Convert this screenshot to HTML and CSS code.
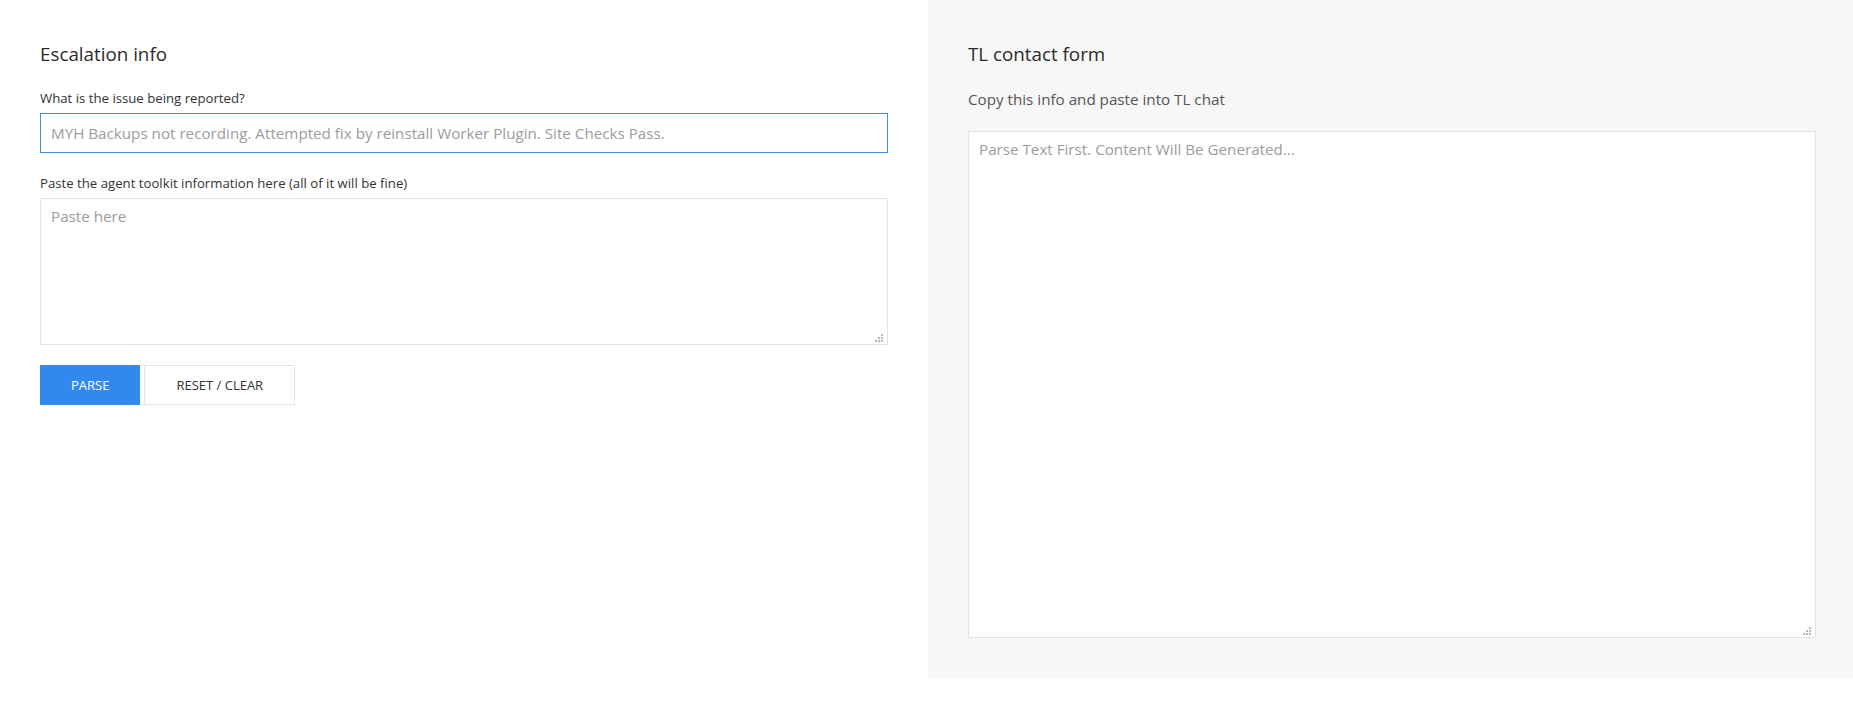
FILE: index.html
```html
<!DOCTYPE html>
<html lang="en">
<head>
<meta charset="utf-8">
<title>Escalation info</title>
<link rel="stylesheet" href="styles.css">
</head>
<body>
<div class="page">
  <section class="col col-left">
    <h2 class="title">Escalation info</h2>
    <div class="group">
      <label class="label" for="issue">What is the issue being reported?</label>
      <input class="input" id="issue" type="text" placeholder="MYH Backups not recording. Attempted fix by reinstall Worker Plugin. Site Checks Pass.">
    </div>
    <div class="group">
      <label class="label" for="toolkit">Paste the agent toolkit information here (all of it will be fine)</label>
      <div class="area-wrap">
        <textarea class="area area-small" id="toolkit" placeholder="Paste here"></textarea>
        <svg class="grip" width="8" height="8" viewBox="0 0 8 8"><rect x="6" y="0" width="2" height="2"/><rect x="3" y="3" width="2" height="2"/><rect x="6" y="3" width="2" height="2"/><rect x="0" y="6" width="2" height="2"/><rect x="3" y="6" width="2" height="2"/><rect x="6" y="6" width="2" height="2"/></svg>
      </div>
    </div>
    <div class="actions">
      <button class="btn btn-primary" type="button">PARSE</button>
      <button class="btn btn-default" type="button">RESET / CLEAR</button>
    </div>
  </section>
  <section class="col col-right">
    <h2 class="title">TL contact form</h2>
    <p class="hint">Copy this info and paste into TL chat</p>
    <div class="area-wrap">
      <textarea class="area area-large" placeholder="Parse Text First. Content Will Be Generated..."></textarea>
      <svg class="grip" width="8" height="8" viewBox="0 0 8 8"><rect x="6" y="0" width="2" height="2"/><rect x="3" y="3" width="2" height="2"/><rect x="6" y="3" width="2" height="2"/><rect x="0" y="6" width="2" height="2"/><rect x="3" y="6" width="2" height="2"/><rect x="6" y="6" width="2" height="2"/></svg>
    </div>
  </section>
</div>
</body>
</html>
```
FILE: styles.css
```css
* { box-sizing: border-box; }
html, body { margin: 0; padding: 0; background: #fff; }
body {
  font-family: "Segoe UI", "Open Sans", "Noto Sans", sans-serif;
  color: #333;
}
.page {
  display: grid;
  grid-template-columns: 928px 1fr;
  align-items: start;
}
.col-left { padding: 40px 40px 40px 40px; }
.col-right {
  background: #f7f7f7;
  padding: 40px 37px 40px 40px;
}
.title {
  margin: 0 0 20px 0;
  font-size: 18.8px;
  line-height: 28px;
  font-weight: 400;
  color: #2b2b2b;
}
.group { margin-bottom: 20px; }
.label {
  display: block;
  font-size: 13.2px;
  line-height: 20px;
  margin-bottom: 5px;
  color: #333;
}
.input {
  display: block;
  width: 100%;
  height: 40px;
  border: 1px solid #3a8ee6;
  padding: 0 10px;
  font-family: inherit;
  font-size: 15.2px;
  color: #333;
  background: #fff;
  outline: none;
}
.input::placeholder, .area::placeholder { color: #9c9c9c; }
.area-wrap { position: relative; }
.area {
  display: block;
  width: 100%;
  border: 1px solid #e3e3e3;
  padding: 7px 10px;
  font-family: inherit;
  font-size: 15.2px;
  color: #333;
  background: #fff;
  resize: none;
  outline: none;
}
.area-small { height: 147px; }
.area-large { height: 507px; }
.grip {
  position: absolute;
  right: 5px;
  bottom: 3px;
  fill: #b8b8b8;
}
.hint {
  margin: 0 0 21px 0;
  font-size: 15.2px;
  line-height: 22px;
  color: #555;
}
.actions { display: flex; gap: 4px; }
.btn {
  height: 40px;
  padding: 0 30px;
  font-family: inherit;
  font-size: 13px;
  border: 1px solid transparent;
  cursor: pointer;
}
.btn-primary { background: #318aeb; color: #fff; border-color: #318aeb; }
.btn-default { background: #fff; color: #333; border-color: #e3e3e3; padding: 0 31px; }
```
